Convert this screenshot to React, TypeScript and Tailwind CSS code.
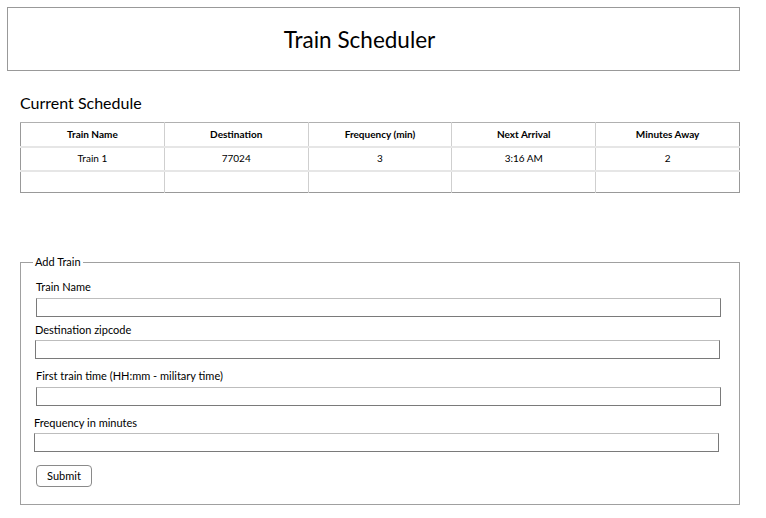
import React from "react";

const cols = ["Train Name", "Destination", "Frequency (min)", "Next Arrival", "Minutes Away"];
const rows = [["Train 1", "77024", "3", "3:16 AM", "2"], ["", "", "", "", ""]];

const fields = [
  { label: "Train Name", wrap: "ml-[15px] mt-[10px]", input: "w-[685px] mt-[4px]" },
  { label: "Destination zipcode", wrap: "ml-[14px] mt-[5px]", input: "w-[685px] mt-[3px]" },
  { label: "First train time (HH:mm - military time)", wrap: "ml-[15px] mt-[9px]", input: "w-[685px] mt-[4px]" },
  { label: "Frequency in minutes", wrap: "ml-[13px] mt-[9px]", input: "w-[685px] mt-[3px]" },
];

export default function App() {
  return (
    <div className="min-h-[518px] w-[766px] bg-white pl-[7px] pt-[7px] text-black [font-family:'Segoe_UI',Lato,sans-serif]">
      <div className="flex h-[64px] w-[733px] items-center justify-center border border-[#999] pt-[3px] pr-[28px]">
        <h1 className="text-[22.5px] leading-none">Train Scheduler</h1>
      </div>

      <div className="ml-[13px] w-[720px]">
        <h2 className="mt-[22px] text-[16px] leading-[20px]">Current Schedule</h2>
        <table className="mt-[9px] w-full table-fixed border-collapse border border-t-[#b0b0b0] border-l-[#999] border-r-[#999] border-b-[#999] text-[10px]">
          <thead>
            <tr className="h-[24px] border-b-2 border-[#e6e6e6]">
              {cols.map((c) => (
                <th key={c} className="border-r border-[#cfcfcf] font-bold last:border-r-0">
                  {c}
                </th>
              ))}
            </tr>
          </thead>
          <tbody>
            {rows.map((r, i) => (
              <tr key={i} className={i === 0 ? "h-[24px] border-b-2 border-[#e6e6e6]" : "h-[22px]"}>
                {r.map((v, j) => (
                  <td key={j} className="border-r border-[#cfcfcf] text-center last:border-r-0">
                    {v}
                  </td>
                ))}
              </tr>
            ))}
          </tbody>
        </table>

        <fieldset className="mt-[62px] h-[250px] border border-[#a0a0a0] pb-[16px]">
          <legend className="ml-[12px] px-[2px] text-[11px] leading-[14px]">Add Train</legend>
          {fields.map((f) => (
            <div key={f.label} className={f.wrap}>
              <label className="block text-[11px] leading-[15px]">{f.label}</label>
              <input
                type="text"
                className={`block h-[19px] border border-[#7a7a7a] border-t-[#bdbdbd] ${f.input}`}
              />
            </div>
          ))}
          <button className="ml-[15px] mt-[13px] h-[22px] w-[56px] rounded-[4px] border border-[#8a8a8a] bg-white text-[11px]">
            Submit
          </button>
        </fieldset>
      </div>
    </div>
  );
}
